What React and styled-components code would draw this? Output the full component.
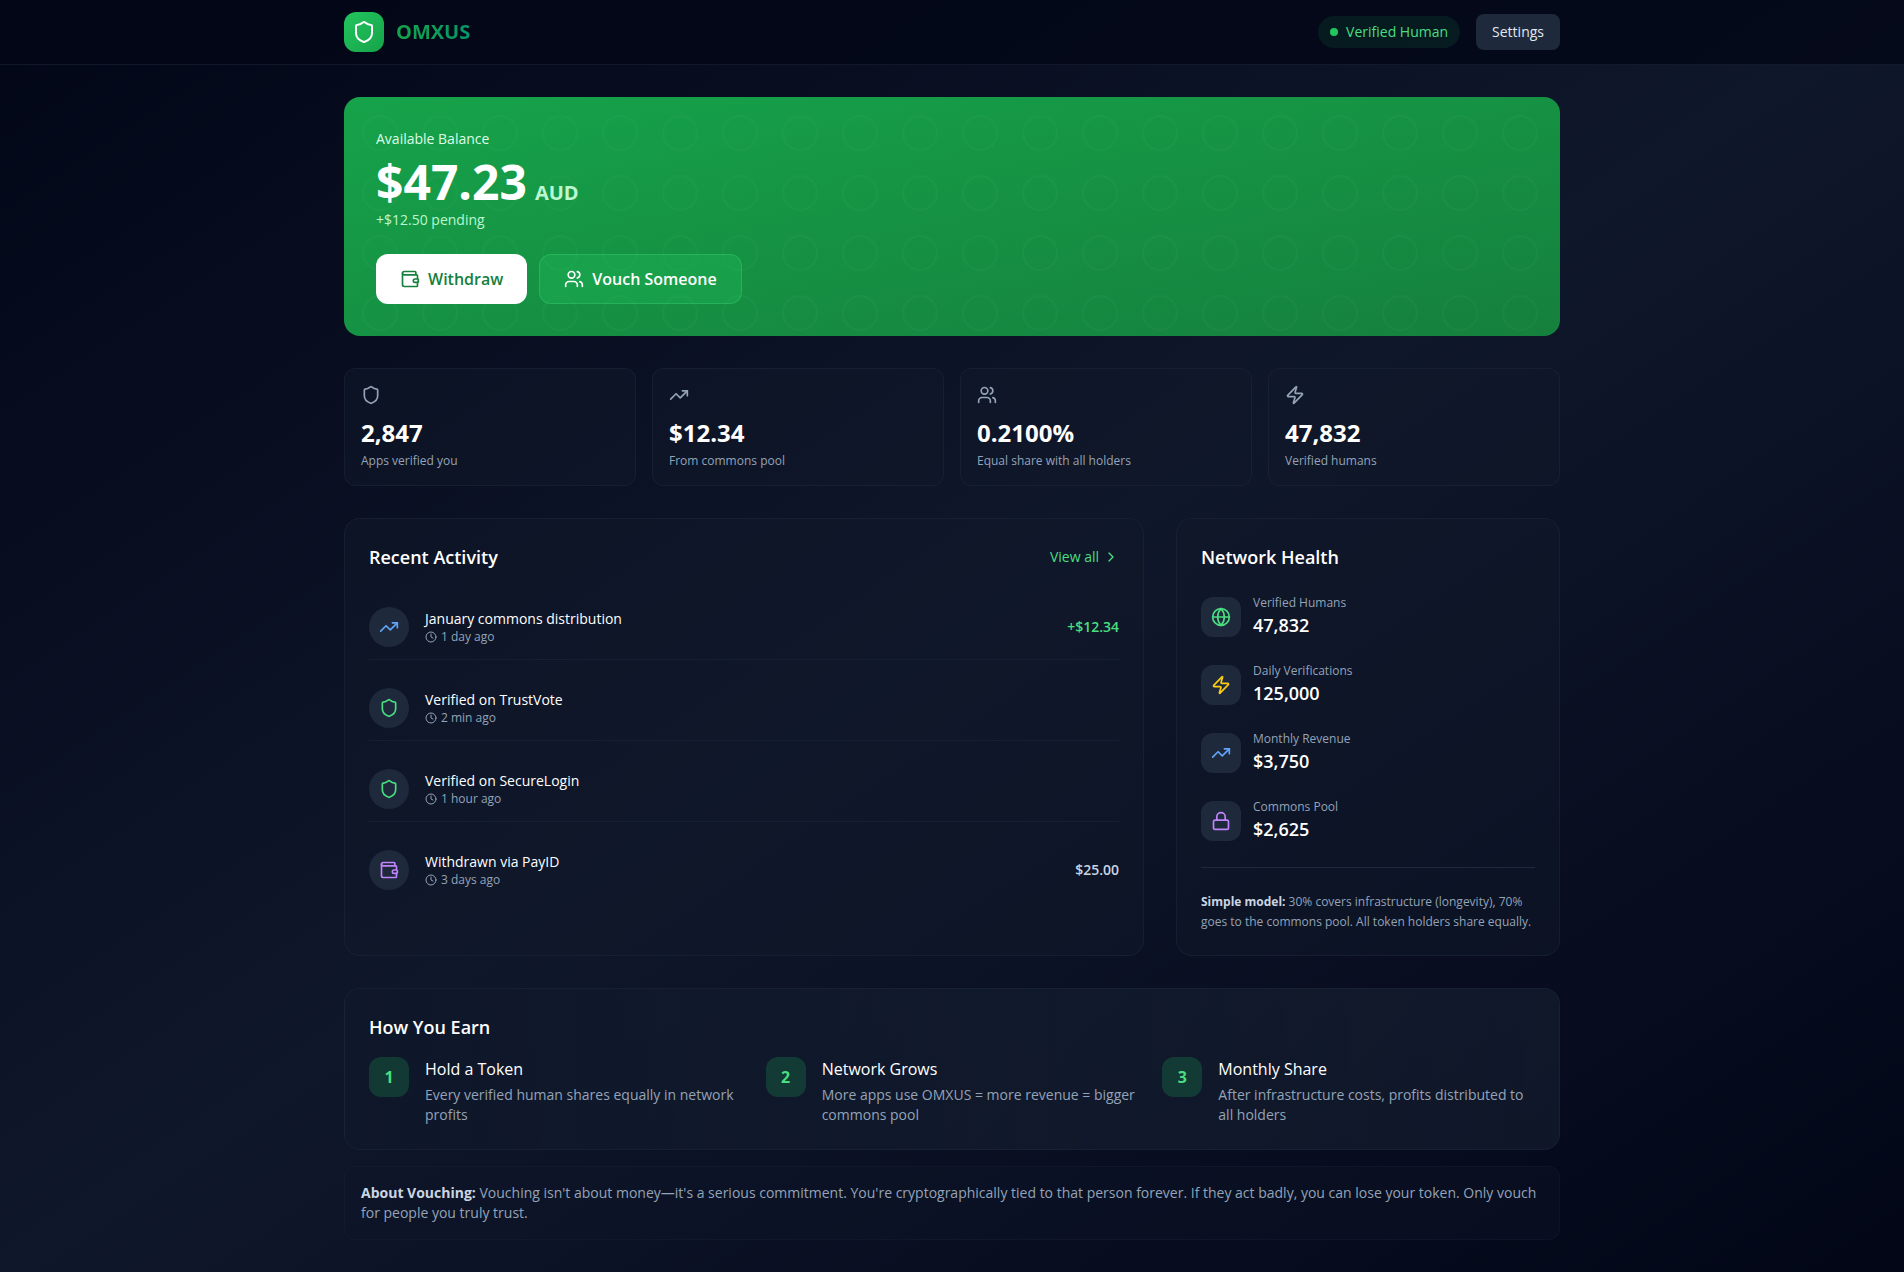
import React from "react";
import styled, { createGlobalStyle, css } from "styled-components";
import {
  Shield,
  Wallet,
  Users,
  TrendingUp,
  Zap,
  ChevronRight,
  Clock,
  Globe,
  Lock,
} from "lucide-react";

const c = {
  slate950: "#020617",
  slate900: "#0f172a",
  slate800: "#1e293b",
  slate400: "#94a3b8",
  slate300: "#cbd5e1",
  slate200: "#e2e8f0",
  green100: "#dcfce7",
  green200: "#bbf7d0",
  green400: "#4ade80",
  green500: "#22c55e",
  green600: "#16a34a",
  green700: "#15803d",
  emerald600: "#059669",
  blue400: "#60a5fa",
  yellow400: "#facc15",
  purple400: "#c084fc",
};

const GlobalStyle = createGlobalStyle`
  *, *::before, *::after { box-sizing: border-box; }
  body {
    margin: 0;
    background: ${c.slate950};
    color: #fff;
    font-family: "Open Sans", "Noto Sans", sans-serif;
    font-size: 16px;
    line-height: 24px;
  }
  h1, h2, h3, p, ul, ol, dl, dd { margin: 0; padding: 0; font-weight: inherit; font-size: inherit; }
  ul, ol { list-style: none; }
  button { font: inherit; color: inherit; border: 0; cursor: pointer; }
  svg { display: block; flex-shrink: 0; }
`;

const Page = styled.div`
  min-height: 100vh;
  background: linear-gradient(to bottom right, ${c.slate950}, ${c.slate900}, ${c.slate950});
`;

const container = css`
  max-width: 1280px;
  margin: 0 auto;
  padding-left: 32px;
  padding-right: 32px;
`;

const Header = styled.header`
  background: rgba(2, 6, 23, 0.8);
  border-bottom: 1px solid rgba(30, 41, 59, 0.5);
`;

const HeaderInner = styled.div`
  ${container}
  display: flex;
  align-items: center;
  justify-content: space-between;
  padding-top: 12px;
  padding-bottom: 12px;
`;

const Brand = styled.div`
  display: flex;
  align-items: center;
  gap: 12px;
`;

const Logo = styled.div`
  display: grid;
  place-items: center;
  width: 40px;
  height: 40px;
  border-radius: 12px;
  background: linear-gradient(to bottom right, ${c.green500}, ${c.green600});
`;

const BrandName = styled.h1`
  && { font-size: 20px; font-weight: 700; }
  line-height: 28px;
  color: transparent;
  background: linear-gradient(to right, ${c.green600}, ${c.emerald600});
  background-clip: text;
`;

const HeaderActions = styled.div`
  display: flex;
  align-items: center;
  gap: 16px;
`;

const StatusPill = styled.div`
  display: flex;
  align-items: center;
  gap: 8px;
  padding: 6px 12px;
  border-radius: 16px;
  background: rgba(34, 197, 94, 0.1);
  color: ${c.green400};
  font-size: 14px;
  line-height: 20px;
`;

const StatusDot = styled.span`
  width: 8px;
  height: 8px;
  border-radius: 50%;
  background: ${c.green500};
`;

const SettingsButton = styled.button`
  && { font-size: 14px; line-height: 20px; color: ${c.slate200}; }
  padding: 8px 16px;
  border-radius: 8px;
  background: ${c.slate800};
`;

const Main = styled.main`
  ${container}
  display: grid;
  gap: 32px;
  padding-top: 32px;
  padding-bottom: 32px;
`;

const Balance = styled.section`
  position: relative;
  overflow: hidden;
  padding: 32px;
  border-radius: 16px;
  background: linear-gradient(to bottom right, ${c.green600}, ${c.green700});
`;

const RingPattern = styled.svg`
  position: absolute;
  inset: 0;
  width: 100%;
  height: 100%;
`;

const BalanceBody = styled.div`
  position: relative;
`;

const BalanceLabel = styled.p`
  && { margin-bottom: 8px; font-size: 14px; }
  line-height: 20px;
  color: ${c.green100};
`;

const BalanceAmount = styled.p`
  display: flex;
  align-items: baseline;
  gap: 8px;
  && { font-size: 48px; font-weight: 700; }
  line-height: 49px;
`;

const Currency = styled.span`
  font-size: 20px;
  line-height: 24px;
  color: ${c.green200};
`;

const Pending = styled.p`
  && { margin-top: 4px; font-size: 14px; }
  line-height: 20px;
  color: ${c.green200};
`;

const BalanceActions = styled.div`
  display: flex;
  gap: 12px;
  margin-top: 24px;
`;

const ActionButton = styled.button`
  && {
    font-weight: 600;
    color: ${(p) => (p.$primary ? c.green700 : "#fff")};
    border: ${(p) => (p.$primary ? "0" : "1px solid rgba(74, 222, 128, 0.3)")};
  }
  display: flex;
  align-items: center;
  gap: 8px;
  padding: 12px 24px;
  border-radius: 12px;
  background: ${(p) => (p.$primary ? "#fff" : "rgba(34, 197, 94, 0.3)")};
`;

const Stats = styled.ul`
  display: grid;
  grid-template-columns: repeat(4, 1fr);
  gap: 16px;
`;

const card = css`
  border: 1px solid rgba(30, 41, 59, 0.5);
  background: rgba(15, 23, 42, 0.5);
`;

const StatCard = styled.li`
  ${card}
  padding: 16px;
  border-radius: 12px;
  color: ${c.slate400};
`;

const StatValue = styled.p`
  && { margin-top: 12px; font-size: 24px; font-weight: 700; }
  line-height: 32px;
  color: #fff;
`;

const StatLabel = styled.p`
  && { margin-top: 4px; font-size: 12px; }
  line-height: 16px;
`;

const Columns = styled.div`
  display: grid;
  grid-template-columns: repeat(3, 1fr);
  gap: 32px;
`;

const Panel = styled.section`
  ${card}
  grid-column: span ${(p) => p.$span || 1};
  padding: 24px;
  border-radius: 16px;
`;

const PanelHead = styled.div`
  display: flex;
  align-items: center;
  justify-content: space-between;
  margin-bottom: ${(p) => p.$gap || 24}px;
`;

const PanelTitle = styled.h2`
  && { font-size: 18px; font-weight: 600; }
  line-height: 28px;
`;

const ViewAll = styled.a`
  display: flex;
  align-items: center;
  gap: 4px;
  font-size: 14px;
  line-height: 20px;
  color: ${c.green400};
  text-decoration: none;
`;

const ActivityList = styled.ul`
  display: grid;
  gap: 16px;
`;

const ActivityRow = styled.li`
  display: flex;
  align-items: center;
  gap: 16px;
  && { padding: 12px 0; }
  &:not(:last-child) { border-bottom: 1px solid rgba(30, 41, 59, 0.5); }
`;

const IconTile = styled.span`
  display: grid;
  place-items: center;
  flex-shrink: 0;
  width: 40px;
  height: 40px;
  border-radius: ${(p) => (p.$round ? "50%" : "12px")};
  background: ${c.slate800};
  color: ${(p) => p.$color};
`;

const ActivityText = styled.div`
  flex: 1;
  min-width: 0;
`;

const ActivityTitle = styled.p`
  && { font-size: 14px; }
  line-height: 20px;
`;

const ActivityTime = styled.p`
  display: flex;
  align-items: center;
  gap: 4px;
  && { font-size: 12px; }
  line-height: 16px;
  color: ${c.slate400};
`;

const Amount = styled.span`
  font-size: 14px;
  font-weight: 600;
  line-height: 20px;
  color: ${(p) => (p.$credit ? c.green400 : c.slate300)};
`;

const HealthList = styled.dl`
  display: grid;
  gap: 24px;
`;

const HealthItem = styled.div`
  display: flex;
  align-items: center;
  gap: 12px;
`;

const HealthLabel = styled.dt`
  font-size: 12px;
  line-height: 16px;
  color: ${c.slate400};
`;

const HealthValue = styled.dd`
  && { font-size: 18px; font-weight: 600; }
  line-height: 28px;
`;

const ModelNote = styled.p`
  && { margin-top: 24px; padding-top: 24px; font-size: 12px; }
  border-top: 1px solid ${c.slate800};
  line-height: 1.625;
  color: ${c.slate400};
`;

const Strong = styled.strong`
  font-weight: 700;
  color: ${c.slate300};
`;

const Footer = styled.div`
  display: grid;
  gap: 16px;
`;

const EarnPanel = styled(Panel)`
  background: linear-gradient(to right, ${c.slate900}, rgba(30, 41, 59, 0.4));
`;

const Steps = styled.ol`
  display: grid;
  grid-template-columns: repeat(3, 1fr);
  gap: 24px;
`;

const Step = styled.li`
  display: flex;
  align-items: flex-start;
  gap: 16px;
`;

const StepNumber = styled.span`
  display: grid;
  place-items: center;
  flex-shrink: 0;
  width: 40px;
  height: 40px;
  border-radius: 12px;
  background: rgba(34, 197, 94, 0.2);
  color: ${c.green400};
  font-weight: 700;
`;

const StepTitle = styled.h3`
  && { margin-bottom: 4px; }
`;

const StepText = styled.p`
  && { font-size: 14px; }
  line-height: 20px;
  color: ${c.slate400};
`;

const Notice = styled.section`
  padding: 16px;
  border: 1px solid rgba(30, 41, 59, 0.3);
  border-radius: 12px;
  background: rgba(15, 23, 42, 0.3);
`;

const stats = [
  { icon: Shield, value: "2,847", label: "Apps verified you" },
  { icon: TrendingUp, value: "$12.34", label: "From commons pool" },
  { icon: Users, value: "0.2100%", label: "Equal share with all holders" },
  { icon: Zap, value: "47,832", label: "Verified humans" },
];

const activity = [
  { icon: TrendingUp, color: c.blue400, title: "January commons distribution", time: "1 day ago", amount: "+$12.34", credit: true },
  { icon: Shield, color: c.green400, title: "Verified on TrustVote", time: "2 min ago" },
  { icon: Shield, color: c.green400, title: "Verified on SecureLogin", time: "1 hour ago" },
  { icon: Wallet, color: c.purple400, title: "Withdrawn via PayID", time: "3 days ago", amount: "$25.00" },
];

const health = [
  { icon: Globe, color: c.green400, label: "Verified Humans", value: "47,832" },
  { icon: Zap, color: c.yellow400, label: "Daily Verifications", value: "125,000" },
  { icon: TrendingUp, color: c.blue400, label: "Monthly Revenue", value: "$3,750" },
  { icon: Lock, color: c.purple400, label: "Commons Pool", value: "$2,625" },
];

const steps = [
  { title: "Hold a Token", text: "Every verified human shares equally in network profits" },
  { title: "Network Grows", text: "More apps use OMXUS = more revenue = bigger commons pool" },
  { title: "Monthly Share", text: "After infrastructure costs, profits distributed to all holders" },
];

export default function App() {
  return (
    <Page>
      <GlobalStyle />
      <Header>
        <HeaderInner>
          <Brand>
            <Logo>
              <Shield size={24} aria-hidden="true" />
            </Logo>
            <BrandName>OMXUS</BrandName>
          </Brand>
          <HeaderActions>
            <StatusPill>
              <StatusDot />
              Verified Human
            </StatusPill>
            <SettingsButton type="button">Settings</SettingsButton>
          </HeaderActions>
        </HeaderInner>
      </Header>

      <Main>
        <Balance>
          <RingPattern aria-hidden="true">
            <defs>
              <pattern id="rings" width="60" height="60" patternUnits="userSpaceOnUse">
                <circle cx="36" cy="36" r="17" fill="none" stroke="#fff" strokeWidth="2" strokeOpacity="0.025" />
              </pattern>
            </defs>
            <rect width="100%" height="100%" fill="url(#rings)" />
          </RingPattern>
          <BalanceBody>
            <BalanceLabel>Available Balance</BalanceLabel>
            <BalanceAmount>
              <span>$47.23</span>
              <Currency>AUD</Currency>
            </BalanceAmount>
            <Pending>+$12.50 pending</Pending>
            <BalanceActions>
              <ActionButton type="button" $primary>
                <Wallet size={20} aria-hidden="true" />
                Withdraw
              </ActionButton>
              <ActionButton type="button">
                <Users size={20} aria-hidden="true" />
                Vouch Someone
              </ActionButton>
            </BalanceActions>
          </BalanceBody>
        </Balance>

        <Stats>
          {stats.map(({ icon: Icon, value, label }) => (
            <StatCard key={label}>
              <Icon size={20} aria-hidden="true" />
              <StatValue>{value}</StatValue>
              <StatLabel>{label}</StatLabel>
            </StatCard>
          ))}
        </Stats>

        <Columns>
          <Panel $span={2}>
            <PanelHead>
              <PanelTitle>Recent Activity</PanelTitle>
              <ViewAll href="#activity">
                View all
                <ChevronRight size={16} aria-hidden="true" />
              </ViewAll>
            </PanelHead>
            <ActivityList>
              {activity.map(({ icon: Icon, color, title, time, amount, credit }) => (
                <ActivityRow key={title}>
                  <IconTile $round $color={color}>
                    <Icon size={20} aria-hidden="true" />
                  </IconTile>
                  <ActivityText>
                    <ActivityTitle>{title}</ActivityTitle>
                    <ActivityTime>
                      <Clock size={12} aria-hidden="true" />
                      {time}
                    </ActivityTime>
                  </ActivityText>
                  {amount && <Amount $credit={credit}>{amount}</Amount>}
                </ActivityRow>
              ))}
            </ActivityList>
          </Panel>

          <Panel>
            <PanelHead>
              <PanelTitle>Network Health</PanelTitle>
            </PanelHead>
            <HealthList>
              {health.map(({ icon: Icon, color, label, value }) => (
                <HealthItem key={label}>
                  <IconTile $color={color}>
                    <Icon size={20} aria-hidden="true" />
                  </IconTile>
                  <div>
                    <HealthLabel>{label}</HealthLabel>
                    <HealthValue>{value}</HealthValue>
                  </div>
                </HealthItem>
              ))}
            </HealthList>
            <ModelNote>
              <Strong>Simple model:</Strong> 30% covers infrastructure (longevity), 70% goes to the
              commons pool. All token holders share equally.
            </ModelNote>
          </Panel>
        </Columns>

        <Footer>
          <EarnPanel>
            <PanelHead $gap={16}>
              <PanelTitle>How You Earn</PanelTitle>
            </PanelHead>
            <Steps>
              {steps.map(({ title, text }, i) => (
                <Step key={title}>
                  <StepNumber>{i + 1}</StepNumber>
                  <div>
                    <StepTitle>{title}</StepTitle>
                    <StepText>{text}</StepText>
                  </div>
                </Step>
              ))}
            </Steps>
          </EarnPanel>
          <Notice>
            <StepText>
              <Strong>About Vouching:</Strong> Vouching isn't about money—it's a serious commitment.
              You're cryptographically tied to that person forever. If they act badly, you can lose
              your token. Only vouch for people you truly trust.
            </StepText>
          </Notice>
        </Footer>
      </Main>
    </Page>
  );
}
